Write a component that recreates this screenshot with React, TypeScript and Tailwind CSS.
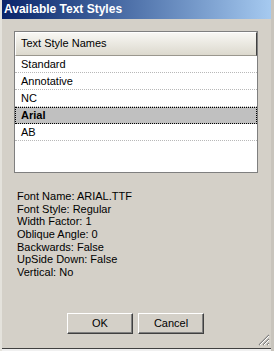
import React from "react";

const styles = ["Standard", "Annotative", "NC", "Arial", "AB"];
const selected = "Arial";

const info = [
  "Font Name: ARIAL.TTF",
  "Font Style: Regular",
  "Width Factor: 1",
  "Oblique Angle: 0",
  "Backwards: False",
  "UpSide Down: False",
  "Vertical: No",
];

function WinButton({ label }: { label: string }) {
  return (
    <button className="w-[66px] h-[21px] bg-[#d4d0c8] border border-t-white border-l-white border-r-[#404040] border-b-[#404040] shadow-[inset_-1px_-1px_0_#808080] text-[11px] leading-[19px] text-black">
      {label}
    </button>
  );
}

export default function App() {
  return (
    <div className="relative w-[274px] h-[351px] bg-[#d4d0c8] flex flex-col font-['Liberation_Sans',Arial,sans-serif] text-black border-l-2 border-l-[#e4e2dc] border-r-[3px] border-r-[#c8c4bc]">
      {/* title bar */}
      <div className="h-[19px] bg-gradient-to-r from-[#0a246a] to-[#a6caf0] pl-[2px] text-white font-bold text-[12px] leading-[19px]">
        Available Text Styles
      </div>

      {/* list of styles */}
      <div className="mt-[12px] ml-[12px] w-[244px] h-[142px] border border-[#7f7f7f] bg-white flex flex-col">
        <div className="h-[24px] bg-gradient-to-b from-[#f8f7f3] to-[#dcd9ce] border-t border-l border-t-white border-l-white border-b border-b-[#9a978e] border-r border-r-[#404040] pl-[5px] text-[11px] leading-[21px]">
          Text Style Names
        </div>
        {styles.map((s) =>
          s === selected ? (
            <div
              key={s}
              className="h-[17px] bg-[#c0c0c0] border border-dotted border-black pl-[5px] text-[11px] leading-[15px] font-bold"
            >
              {s}
            </div>
          ) : (
            <div
              key={s}
              className="h-[17px] border-b border-dotted border-b-[#b8b8b8] pl-[6px] text-[11px] leading-[16px]"
            >
              {s}
            </div>
          )
        )}
      </div>

      {/* font info */}
      <div className="mt-[17px] pl-[15px] text-[11px] leading-[12.67px]">
        {info.map((line) => (
          <div key={line}>{line}</div>
        ))}
      </div>

      <div className="mt-[34px] pl-[65px] flex gap-[5px]">
        <WinButton label="OK" />
        <WinButton label="Cancel" />
      </div>

      <div className="mt-auto h-[3px] border-t border-t-[#404040] bg-[#f0f0f0]" />

      {/* size grip */}
      <svg
        className="absolute right-[1px] bottom-[5px]"
        width="12"
        height="12"
        viewBox="0 0 12 12"
      >
        <path d="M11 1 L1 11 M11 5 L5 11 M11 9 L9 11" stroke="#808080" strokeWidth="1.2" />
        <path d="M11 2 L2 11 M11 6 L6 11 M11 10 L10 11" stroke="#ffffff" strokeWidth="1" />
      </svg>
    </div>
  );
}
